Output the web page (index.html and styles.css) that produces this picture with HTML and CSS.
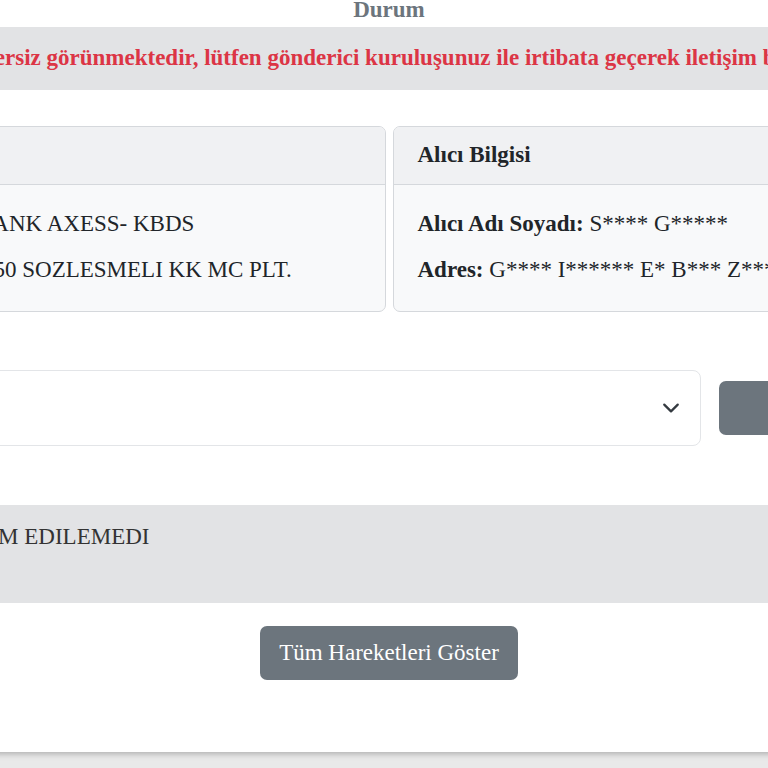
FILE: index.html
```html
<!DOCTYPE html>
<html lang="tr">
<head>
  <meta charset="UTF-8">
  <meta name="viewport" content="width=device-width, initial-scale=1.0">
  <title>Gönderi Durumu</title>
  <link rel="stylesheet" href="styles.css">
</head>
<body>
  <div class="page">
    <h2 class="title">Durum</h2>
    <div class="alert">Adres bilgileriniz geçersiz görünmektedir, lütfen gönderici kuruluşunuz ile irtibata geçerek iletişim bilgilerinizi güncelleyiniz.</div>

    <div class="cards">
      <div class="card">
        <div class="card-header">Gönderici Bilgisi</div>
        <div class="card-body">
          <p><b>Gönderici Adı:</b> AKBANK AXESS- KBDS</p>
          <p><b>Ürün Tipi:</b> AXESS 150 SOZLESMELI KK MC PLT.</p>
        </div>
      </div>
      <div class="card">
        <div class="card-header">Alıcı Bilgisi</div>
        <div class="card-body">
          <p><b>Alıcı Adı Soyadı:</b> S**** G*****</p>
          <p><b>Adres:</b> G**** I****** E* B*** Z*****</p>
        </div>
      </div>
    </div>

    <div class="filter">
      <div class="select">
        <span></span>
        <svg width="18" height="18" viewBox="0 0 16 16"><path d="M2 5l6 6 6-6" fill="none" stroke="#343a40" stroke-width="2" stroke-linecap="round" stroke-linejoin="round"/></svg>
      </div>
      <button class="btn btn-query">Sorgula</button>
    </div>

    <div class="status">
      <span class="date">12.03.2024</span>
      <span>TESLIM EDILEMEDI</span>
    </div>

    <div class="actions">
      <button class="btn">Tüm Hareketleri Göster</button>
    </div>
  </div>
</body>
</html>
```

FILE: styles.css
```css
body {
  margin: 0;
  width: 768px;
  height: 768px;
  overflow: hidden;
  background: #e9e9e9;
  font-family: 'Liberation Serif', 'Times New Roman', serif;
  font-size: 23px;
  line-height: 26px;
  color: #212529;
}

.page {
  display: flow-root;
  width: 1290px;
  margin-left: -256px;
  padding: 0 24px 72px;
  box-sizing: border-box;
  background: #fff;
  box-shadow: 0 2px 6px rgba(0, 0, 0, 0.25);
}

.title {
  margin: -3px 0 4px;
  font-size: 23px;
  line-height: 26px;
  text-align: center;
  color: #6c757d;
}

.alert {
  padding: 18px 19px 19px;
  background: #e2e3e5;
  color: #dc3545;
  font-weight: bold;
  white-space: nowrap;
}

.cards {
  display: grid;
  grid-template-columns: 1fr 1fr;
  gap: 7px;
  margin-top: 36px;
}

.card {
  border: 1px solid #d5d8dc;
  border-radius: 7px;
  background: #f8f9fa;
  overflow: hidden;
}

.card-header {
  padding: 15px 24px 16px;
  background: #f0f1f3;
  border-bottom: 1px solid #d5d8dc;
  font-weight: bold;
}

.card-body {
  padding: 26px 24px 28px;
}

.card-body p {
  margin: 0 0 20px;
  white-space: nowrap;
}

.card-body p:last-child {
  margin-bottom: 0;
}

.filter {
  display: flex;
  align-items: center;
  gap: 18px;
  margin-top: 58px;
}

.select {
  flex: 1;
  height: 74px;
  display: flex;
  align-items: center;
  justify-content: space-between;
  padding: 0 20px;
  border: 1px solid #e3e5e8;
  border-radius: 8px;
  background: #fff;
}

.btn {
  font-family: inherit;
  font-size: 23px;
  line-height: 26px;
  padding: 14px 19px;
  border: none;
  border-radius: 7px;
  background: #6c757d;
  color: #fff;
  cursor: pointer;
}

.btn-query {
  width: 291px;
}

.status {
  display: flex;
  gap: 40px;
  margin-top: 59px;
  padding: 19px 24px 53px;
  background: #e2e3e5;
  color: #333;
}

.actions {
  margin-top: 23px;
  text-align: center;
}
```
